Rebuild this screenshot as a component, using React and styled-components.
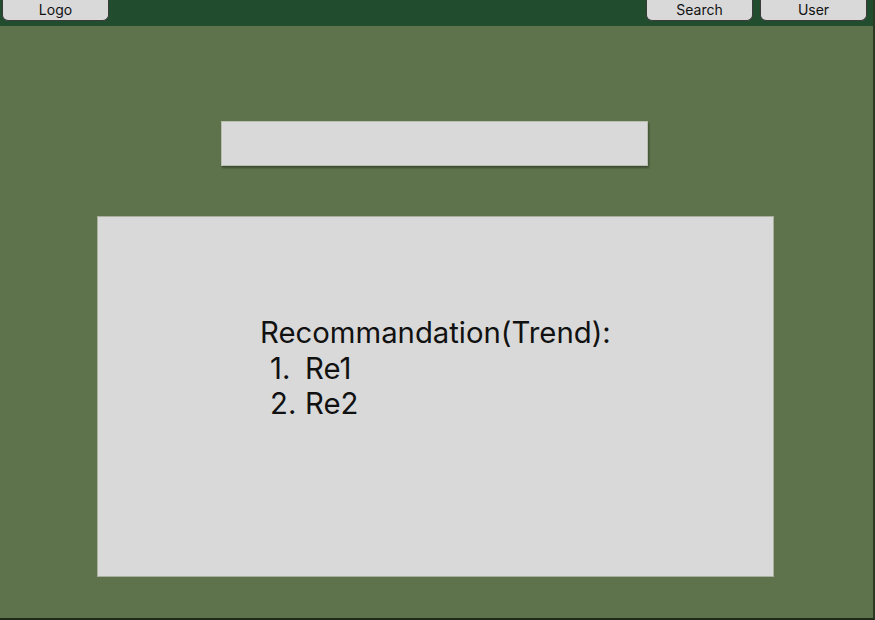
import React from 'react'
import styled, { createGlobalStyle } from 'styled-components'

const GlobalStyle = createGlobalStyle`
	html, body {
		margin: 0;
		padding: 0;
		background: #5e724b;
	}
	body {
		font-family: Inter, "Noto Sans", sans-serif;
	}
`

const Page = styled.div`
	width: 875px;
	height: 620px;
	box-sizing: border-box;
	background: #5e724b;
	border-right: 2px solid #2c3a24;
	border-bottom: 2px solid #1f2a19;
	display: flex;
	flex-direction: column;
	overflow: hidden;
`

const Header = styled.div`
	height: 26px;
	background: #214d2e;
	display: flex;
	align-items: flex-start;
	padding: 0 6px 0 2px;
	gap: 7px;
`

const NavButton = styled.div`
	width: 107px;
	height: 21px;
	box-sizing: border-box;
	background: #d9d9d9;
	border: 1px solid #3a3a3a;
	border-top: none;
	border-radius: 0 0 6px 6px;
	display: flex;
	align-items: center;
	justify-content: center;
	padding-bottom: 2px;
	font-size: 14px;
	color: #111;
	margin-left: ${({ pushRight }) => (pushRight ? 'auto' : '0')};
`

const Main = styled.div`
	flex: 1;
	display: flex;
	flex-direction: column;
	align-items: center;
	padding-top: 95px;
	padding-right: 1px;
`

const SearchBar = styled.div`
	width: 427px;
	height: 45px;
	margin-left: -4px;
	background: #d9d9d9;
	border: 1px solid #b8bfb0;
	box-sizing: border-box;
	box-shadow: 1px 2px 2px rgba(0, 0, 0, 0.35);
`

const Card = styled.div`
	margin-top: 50px;
	margin-left: -1px;
	width: 677px;
	height: 361px;
	box-sizing: border-box;
	background: #d9d9d9;
	border: 1px solid #a9b09f;
	padding: 98px 0 0 162px;
	color: #111;
	font-size: 29.3px;
	line-height: 35.5px;
`

const Title = styled.div``

const Item = styled.div`
	display: flex;
	padding-left: 10px;
`

const Num = styled.span`
	width: 35px;
`

const items = ['Re1', 'Re2']

const App = () => {
	return (
		<>
			<GlobalStyle />
			<Page>
				<Header>
					<NavButton>Logo</NavButton>
					<NavButton pushRight>Search</NavButton>
					<NavButton>User</NavButton>
				</Header>
				<Main>
					<SearchBar />
					<Card>
						<Title>Recommandation(Trend):</Title>
						{items.map((it, i) => (
							<Item key={it}>
								<Num>{i + 1}.</Num>
								<span>{it}</span>
							</Item>
						))}
					</Card>
				</Main>
			</Page>
		</>
	)
}

export default App
